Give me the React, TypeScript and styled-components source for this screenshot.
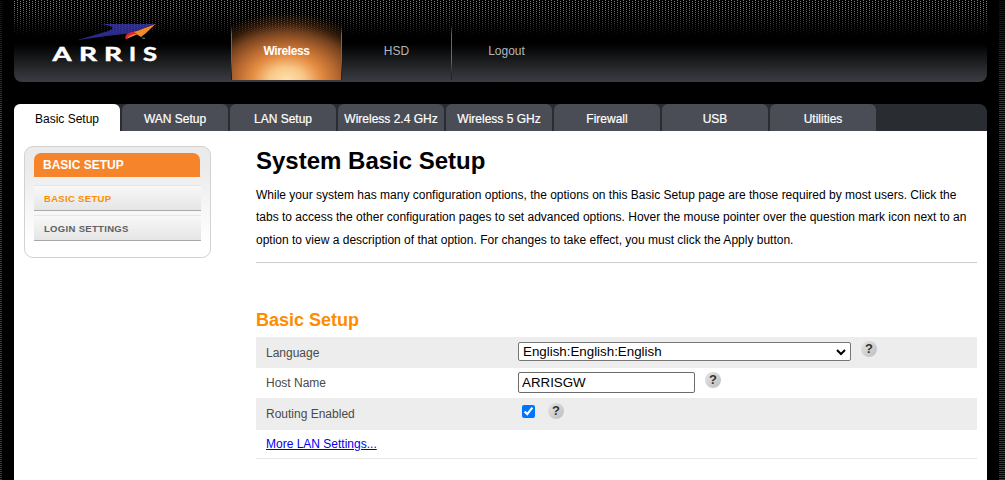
import React from 'react';
import styled, { createGlobalStyle } from 'styled-components';

const Global = createGlobalStyle`
  * { box-sizing: border-box; }
  body { margin: 0; background: #000; font-family: Arial, "Liberation Sans", sans-serif; font-size: 12px; overflow: hidden; }
  h1, h2, p { margin: 0; }
`;

const Page = styled.div`
  display: flex;
  justify-content: space-between;
  width: 1005px;
  height: 480px;
  background: #000;
`;
const Edge = styled.div<{ $w: number }>`
  width: ${p => p.$w}px;
  background: linear-gradient(rgba(0,0,0,.7), transparent 110px), repeating-linear-gradient(#000 0 1px, #383838 1px 2px);
`;
const Shell = styled.div`
  width: 973px;
  margin: 0 12px;
`;
const Header = styled.header`
  position: relative;
  display: flex;
  height: 82px;
  border-radius: 0 0 8px 8px;
  background: linear-gradient(#000 44px, #17181a 58px, #3a3d43 82px);
  overflow: hidden;
`;
const Mesh = styled.div`
  position: absolute;
  inset: 0 0 auto 0;
  height: 36px;
  background:
    conic-gradient(from 270deg at 1px 1px, #747a84 90deg, transparent 0) 0 1px / 6px 2px,
    conic-gradient(from 270deg at 1px 1px, #747a84 90deg, transparent 0) 3px 0 / 6px 2px;
  mask-image: linear-gradient(#000 8px, transparent);
  pointer-events: none;
`;
const Brand = styled.div`
  width: 217px;
  padding: 20px 0 0 36px;
`;
const MainNav = styled.nav`
  display: flex;
  height: 80px;
`;
const MainItem = styled.a<{ $on?: boolean }>`
  width: 109px;
  padding-top: 43px;
  text-align: center;
  line-height: 16px;
  color: ${p => (p.$on ? '#fff' : '#b4b6ba')};
  font-weight: ${p => (p.$on ? 700 : 400)};
  letter-spacing: ${p => (p.$on ? '-.4px' : '0')};
  background: ${p => p.$on ? 'radial-gradient(ellipse 96px 68px at 50% 100%, #ffe0ad 0, #f9c888 18%, #e48c42 36%, #b5672f 53%, #77431f 70%, rgba(65,34,12,.75) 84%, transparent 100%)' : 'none'};
`;
const Divider = styled.i`
  width: 1px;
  background: linear-gradient(transparent 25px, #66686c 35px, #66686c 60px, #222 75px);
`;
const Tabs = styled.nav`
  display: flex;
  gap: 2px;
  height: 27px;
  margin-top: 22px;
  background: #292c31;
  border-radius: 8px 8px 0 0;
`;
const Tab = styled.a<{ $on?: boolean }>`
  width: 106px;
  height: 27px;
  line-height: 30px;
  text-align: center;
  border-radius: 6px 6px 0 0;
  color: ${p => (p.$on ? '#000' : '#fff')};
  -webkit-text-stroke: ${p => (p.$on ? '0' : '.2px #fff')};
  background: ${p => (p.$on ? '#fff' : '#4a4d55')};
  white-space: nowrap;
`;
const Body = styled.main`
  display: flex;
  height: 349px;
  background: #fff;
`;
const SideBox = styled.aside`
  width: 187px;
  height: 112px;
  margin: 15px 45px 0 10px;
  padding: 6px 9px;
  border: 1px solid #d2d2d2;
  border-radius: 9px;
  background: linear-gradient(#ebebeb 20px, #fff 95px);
`;
const SideTitle = styled.div`
  width: 166px;
  height: 24px;
  margin-bottom: 9px;
  padding-left: 9px;
  line-height: 24px;
  border-radius: 7px 7px 0 0;
  background: #f6842b;
  color: #fff;
  font-weight: 700;
`;
const SideLink = styled.a<{ $on?: boolean }>`
  display: block;
  width: 167px;
  height: 25px;
  margin-bottom: 5px;
  padding-left: 10px;
  line-height: 25px;
  border-bottom: 1px solid #aaa;
  background: linear-gradient(#f8f8f8, #e5e5e5);
  box-shadow: 0 -1px #e6e6e6;
  color: ${p => (p.$on ? '#ff8c00' : '#606060')};
  font-size: 9.5px;
  font-weight: 700;
  letter-spacing: .32px;
`;
const Content = styled.section`
  width: 721px;
`;
const Title = styled.h1`
  margin-top: 15px;
  font-size: 24px;
  line-height: 30px;
`;
const Intro = styled.p`
  height: 79px;
  margin-top: 8px;
  line-height: 22.4px;
  border-bottom: 1px solid #ccc;
  white-space: nowrap;
`;
const Section = styled.h2`
  height: 28px;
  margin-top: 46px;
  font-size: 18px;
  line-height: 22px;
  color: #ff8c00;
`;
const Form = styled.div`
  display: flex;
  flex-direction: column;
`;
const Row = styled.div<{ $shade?: boolean; $h: number }>`
  display: flex;
  align-items: center;
  height: ${p => p.$h}px;
  padding-left: 10px;
  background: ${p => (p.$shade ? '#ededed' : '#fff')};
`;
const Label = styled.label`
  width: 252px;
  color: #4a4a4a;
`;
const Select = styled.div`
  display: flex;
  align-items: center;
  justify-content: space-between;
  width: 333px;
  height: 19px;
  margin: -2px 10px 0 0;
  padding: 0 3px 0 4px;
  border: 1px solid #767676;
  border-radius: 2px;
  background: #fff;
  font-size: 13.33px;
`;
const Field = styled.input`
  width: 177px;
  height: 21px;
  margin: -1px 10px 0 0;
  padding: 1px 3px;
  border: 1px solid #6b6b6b;
  border-radius: 2px;
  font: 13.33px Arial, "Liberation Sans", sans-serif;
  color: #000;
`;
const Check = styled.input`
  width: 13px;
  height: 13px;
  margin: -5px 13px 0 4px;
`;
const Help = styled.span`
  width: 16px;
  height: 16px;
  margin-top: -7px;
  border-radius: 50%;
  background: linear-gradient(135deg, #e6e6e6, #bdbdbd);
  color: #333;
  font: 700 13px/16px Arial, "Liberation Sans", sans-serif;
  text-align: center;
`;
const More = styled.div`
  height: 29px;
  padding-left: 10px;
  line-height: 28px;
  border-bottom: 1px solid #e6e6e6;
  a { color: #0000ee; text-decoration: underline; }
`;
const LogoSvg = styled.svg`
  position: relative;
  display: block;
`;

const Logo = () => (
  <LogoSvg width="112" height="46" viewBox="50 20 112 46">
    <path d="M76 40.5 104 32.2Q117 29 110 26L102 24H155L131 33.2Q110 35 76 40.5Z" fill="#2b2a86" />
    <path d="M155.500 24 146 33 141 37 137 34.500 126 39Q124 34 137 31Z" fill="#f58a2b" />
    <path d="M126 39.500Q123 33 134 32L137 33.800Q130 34 126 39.500Z" fill="#dc2430" />
    <text x="141" y="40" fontSize="4" fill="#bbb" fontFamily="Arial, Liberation Sans, sans-serif">™</text>
    <g fill="#fff" stroke="#fff" strokeWidth=".5" fontFamily="Lato, sans-serif" fontWeight="700" fontSize="19">
      <text x="52.500" y="60.500" textLength="19" lengthAdjust="spacingAndGlyphs">A</text>
      <text x="79" y="60.500" textLength="18" lengthAdjust="spacingAndGlyphs">R</text>
      <text x="104" y="60.500" textLength="18" lengthAdjust="spacingAndGlyphs">R</text>
      <text x="129" y="60.500" textLength="7" lengthAdjust="spacingAndGlyphs">I</text>
      <text x="143" y="60.500" textLength="14" lengthAdjust="spacingAndGlyphs">S</text>
    </g>
  </LogoSvg>
);

const tabs = ['Basic Setup', 'WAN Setup', 'LAN Setup', 'Wireless 2.4 GHz', 'Wireless 5 GHz', 'Firewall', 'USB', 'Utilities'];

export default function App() {
  return (
    <>
      <Global />
      <Page>
        <Edge $w={2} />
        <Shell>
          <Header>
            <Brand><Logo /></Brand>
            <MainNav>
              <Divider />
              <MainItem $on>Wireless</MainItem>
              <Divider />
              <MainItem>HSD</MainItem>
              <Divider />
              <MainItem>Logout</MainItem>
            </MainNav>
            <Mesh />
          </Header>
          <Tabs>{tabs.map((t, i) => <Tab key={t} $on={i === 0}>{t}</Tab>)}</Tabs>
          <Body>
            <SideBox>
              <SideTitle>BASIC SETUP</SideTitle>
              <SideLink $on>BASIC SETUP</SideLink>
              <SideLink>LOGIN SETTINGS</SideLink>
            </SideBox>
            <Content>
              <Title>System Basic Setup</Title>
              <Intro>
                While your system has many configuration options, the options on this Basic Setup page are those required by most users. Click the<br />
                tabs to access the other configuration pages to set advanced options. Hover the mouse pointer over the question mark icon next to an<br />
                option to view a description of that option. For changes to take effect, you must click the Apply button.
              </Intro>
              <Section>Basic Setup</Section>
              <Form>
                <Row $shade $h={31}>
                  <Label>Language</Label>
                  <Select>
                    English:English:English
                    <svg width="12" height="8" viewBox="0 0 12 8"><path d="M2 2l4 4 4-4" fill="none" stroke="#000" strokeWidth="2" /></svg>
                  </Select>
                  <Help>?</Help>
                </Row>
                <Row $h={30}>
                  <Label>Host Name</Label>
                  <Field defaultValue="ARRISGW" />
                  <Help>?</Help>
                </Row>
                <Row $shade $h={32}>
                  <Label>Routing Enabled</Label>
                  <Check type="checkbox" defaultChecked />
                  <Help>?</Help>
                </Row>
                <More><a>More LAN Settings...</a></More>
              </Form>
            </Content>
          </Body>
        </Shell>
        <Edge $w={6} />
      </Page>
    </>
  );
}
